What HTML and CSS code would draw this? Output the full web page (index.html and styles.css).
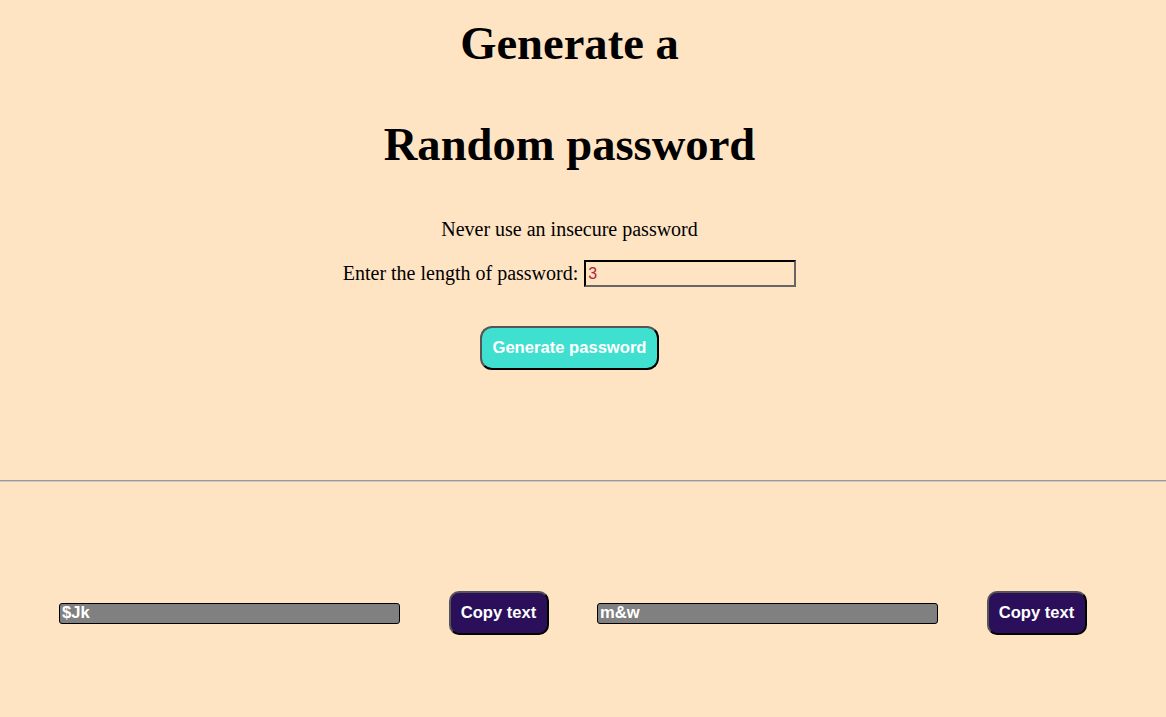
FILE: index.html
```html
<!DOCTYPE html>
<html>
<head>
<meta charset="utf-8">
<link rel="stylesheet" href="styles.css">
</head>
<body>
<main class="top">
  <h1 class="title"><span class="line">Generate a</span><span class="line second">Random password</span></h1>
  <p class="subtitle">Never use an insecure password</p>
  <div class="length-row">
    <label class="length-label" for="len">Enter the length of password:</label>
    <input class="length-input" id="len" type="text" value="3">
  </div>
  <button class="gen-btn">Generate password</button>
</main>
<hr class="divider">
<section class="results">
  <input class="result-input" type="text" value="$Jk">
  <button class="copy-btn">Copy text</button>
  <input class="result-input" type="text" value="m&amp;w">
  <button class="copy-btn">Copy text</button>
</section>
</body>
</html>
```
FILE: styles.css
```css
html, body {
  margin: 0;
  padding: 0;
}
body {
  background: #ffe4c4;
  font-family: "Liberation Serif", "Times New Roman", serif;
  color: #000;
  width: 1166px;
  height: 717px;
  overflow: hidden;
}
.top {
  display: flex;
  flex-direction: column;
  align-items: center;
  padding-right: 27px;
}
.title {
  margin: 0;
  padding-top: 16px;
  font-size: 46.6px;
  font-weight: bold;
  text-align: center;
}
.title .line {
  display: block;
  line-height: 55px;
}
.title .second {
  margin-top: 46px;
}
.subtitle {
  margin: 46px 0 0;
  font-size: 20px;
  line-height: 23px;
}
.length-row {
  margin-top: 19px;
  display: flex;
  align-items: center;
  gap: 6px;
}
.length-label {
  font-size: 20px;
  line-height: 23px;
}
.length-input {
  box-sizing: border-box;
  width: 212px;
  height: 27px;
  margin: 0;
  padding: 1px 2px;
  background: transparent;
  border: 2px inset #767676;
  border-top-color: #222;
  border-left-color: #222;
  border-right-color: #666;
  border-bottom-color: #666;
  font-family: "Liberation Sans", Arial, sans-serif;
  font-size: 16px;
  color: #b22234;
  outline: none;
}
.gen-btn {
  margin-top: 39px;
  box-sizing: border-box;
  width: 179px;
  height: 44px;
  background: #40e0d0;
  color: #fff;
  font-family: "Liberation Sans", Arial, sans-serif;
  font-weight: bold;
  font-size: 16.6px;
  border: 2px outset #555;
  border-right-color: #111;
  border-bottom-color: #111;
  border-radius: 12px;
  padding: 0;
}
.divider {
  margin: 110px 0 0;
  border: 0;
  border-top: 1px solid #9a9a9a;
  border-bottom: 1px solid #c8c8c8;
  height: 0;
}
.results {
  margin-top: 109px;
  display: flex;
  align-items: center;
  padding-left: 59px;
  gap: 48.5px;
}
.result-input {
  box-sizing: border-box;
  width: 341px;
  height: 21px;
  margin: 0;
  padding: 0 2px;
  background: #808080;
  border: 1px solid #000;
  border-radius: 3px;
  color: #fff;
  font-family: "Liberation Sans", Arial, sans-serif;
  font-weight: bold;
  font-size: 16.6px;
  outline: none;
}
.copy-btn {
  box-sizing: border-box;
  width: 100px;
  height: 44px;
  margin: 0;
  padding: 0;
  background: #2b0f5b;
  color: #fff;
  font-family: "Liberation Sans", Arial, sans-serif;
  font-weight: bold;
  font-size: 16.6px;
  border: 2px outset #555;
  border-right-color: #111;
  border-bottom-color: #111;
  border-radius: 10px;
}
```
